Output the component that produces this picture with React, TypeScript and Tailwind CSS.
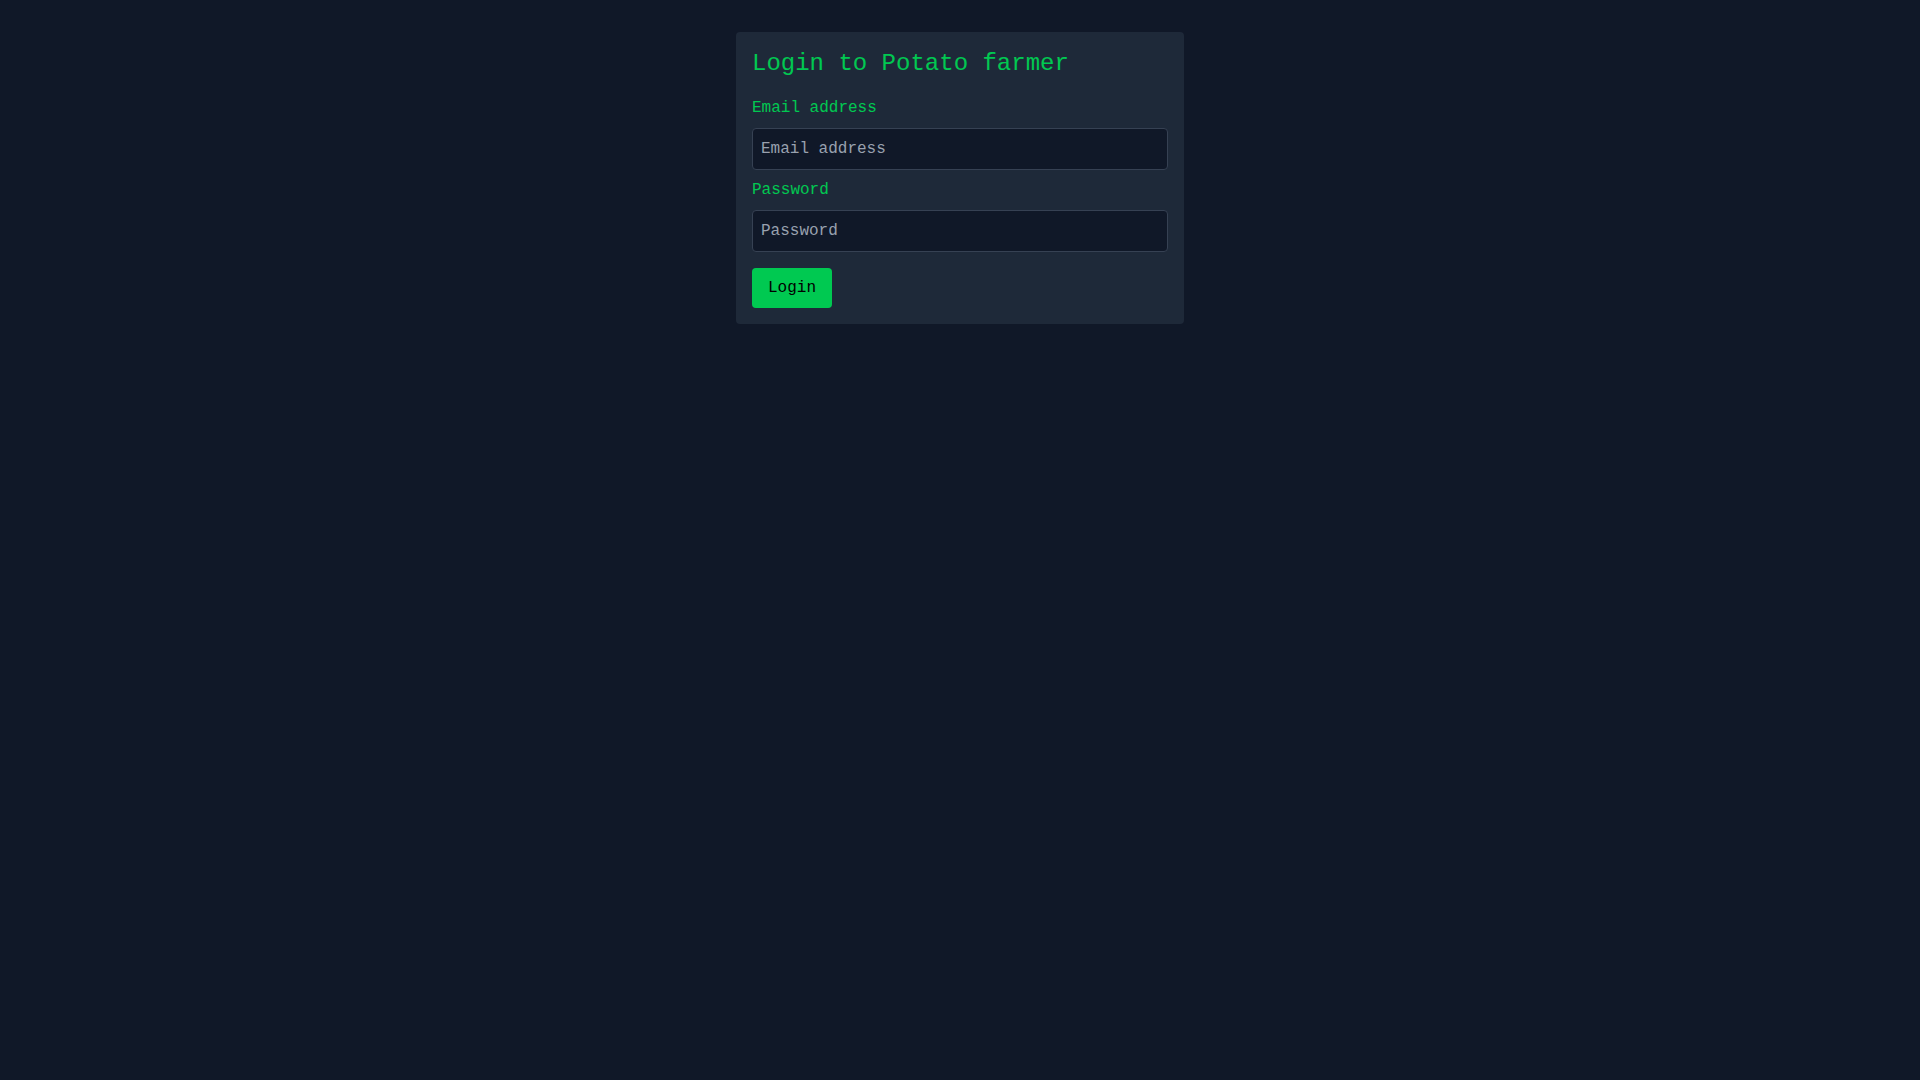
import React from "react";

export default function App() {
  return (
    <div
      className="min-h-screen bg-gray-900 pt-8"
      style={{ fontFamily: '"Liberation Mono", "Courier New", monospace' }}
    >
      <div className="mx-auto w-[448px] rounded bg-gray-800 p-4">
        <h1 className="mb-4 text-2xl text-green-500">Login to Potato farmer</h1>
        <label className="mb-2 block text-base text-green-500">Email address</label>
        <input
          type="email"
          placeholder="Email address"
          className="mb-2 block w-full rounded border border-gray-700 bg-gray-900 px-2 py-2 text-base text-gray-200 placeholder-gray-400 outline-none"
        />
        <label className="mb-2 block text-base text-green-500">Password</label>
        <input
          type="password"
          placeholder="Password"
          className="mb-4 block w-full rounded border border-gray-700 bg-gray-900 px-2 py-2 text-base text-gray-200 placeholder-gray-400 outline-none"
        />
        <button className="rounded bg-green-500 px-4 py-2 text-base text-black">Login</button>
      </div>
    </div>
  );
}
